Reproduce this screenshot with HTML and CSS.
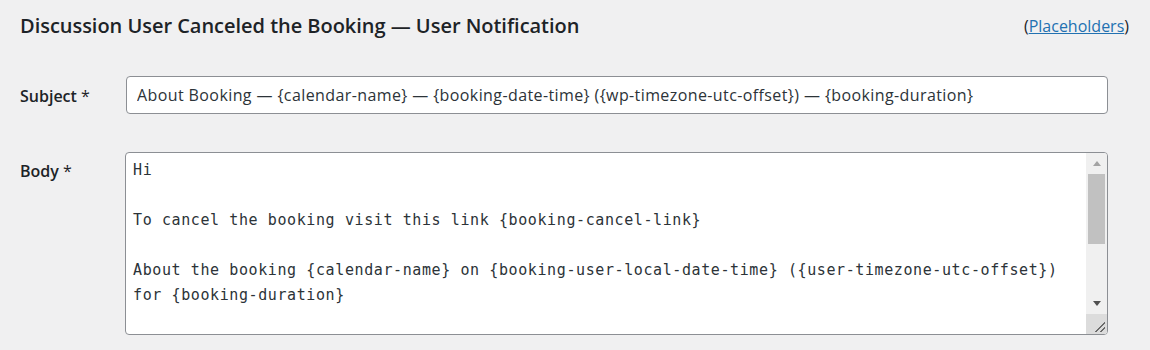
FILE: index.html
```html
<!DOCTYPE html>
<html lang="en">
<head>
    <meta charset="UTF-8" />
    <title>User Notification</title>
    <link rel="stylesheet" href="styles.css">
</head>
<body>

<div class="section-head">
    <h2>Discussion User Canceled the Booking — User Notification</h2>
    <span class="help">(<a href="#">Placeholders</a>)</span>
</div>

<form class="form-table">
    <label for="subject" class="row-label">Subject <span class="req">*</span></label>
    <input type="text" id="subject" class="field-input" value="About Booking — {calendar-name} — {booking-date-time} ({wp-timezone-utc-offset}) — {booking-duration}" />

    <label for="body" class="row-label body-label">Body <span class="req">*</span></label>
    <div class="area-wrap">
        <textarea id="body" class="field-area">Hi

To cancel the booking visit this link {booking-cancel-link}

About the booking {calendar-name} on {booking-user-local-date-time} ({user-timezone-utc-offset})
for {booking-duration}

Thank you
{site-name}
{site-url}</textarea>
        <!-- scrollbar drawn by hand, the headless browser hides native ones -->
        <div class="fake-scroll" aria-hidden="true">
            <span class="sb-btn"><span class="arrow-up"></span></span>
            <span class="sb-track"><span class="sb-thumb"></span></span>
            <span class="sb-btn"><span class="arrow-down"></span></span>
            <span class="sb-corner"></span>
        </div>
    </div>
</form>

</body>
</html>
```

FILE: styles.css
```css
body {
    margin: 0;
    background: #f0f0f1;
    color: #1d2327;
    font-family: "Open Sans", "Noto Sans", sans-serif;
}
.section-head {
    display: flex;
    justify-content: space-between;
    align-items: flex-start;
    padding: 11px 21px 0 20px;
}
.section-head h2 {
    margin: 0;
    font-size: 20px;
    font-weight: 600;
    line-height: 30px;
    letter-spacing: -0.03px;
}
.help {
    font-size: 16px;
    line-height: 30px;
}
.help a {
    color: #2271b1;
    text-decoration: underline;
}
.form-table {
    display: grid;
    grid-template-columns: 106px 982px;
    row-gap: 38px;
    padding: 35px 0 0 20px;
}
.row-label {
    font-size: 16px;
    font-weight: 600;
    align-self: center;
    padding-top: 2px;
}
.row-label .req {
    font-weight: 400;
}
.body-label {
    align-self: start;
    padding-top: 8px;
}
.field-input {
    height: 38px;
    box-sizing: border-box;
    margin: 0;
    padding: 0 10px;
    border: 1px solid #8c8f94;
    border-radius: 4px;
    background: #fff;
    color: #2c3338;
    font-family: "Open Sans", "Noto Sans", sans-serif;
    font-size: 16px;
    letter-spacing: 0.4px;
}
.area-wrap {
    position: relative;
    margin-left: -1px;
}
.field-area {
    display: block;
    width: 100%;
    height: 183px;
    box-sizing: border-box;
    margin: 0;
    padding: 5px 28px 5px 7px;
    border: 1px solid #8c8f94;
    border-radius: 4px;
    background: #fff;
    color: #2c3338;
    font-family: "DejaVu Sans Mono", monospace;
    font-size: 15px;
    line-height: 25px;
    letter-spacing: 0.6px;
    resize: none;
    overflow: hidden;
}
.fake-scroll {
    position: absolute;
    top: 1px;
    right: 1px;
    bottom: 1px;
    width: 21px;
    display: flex;
    flex-direction: column;
    background: #f0f0f0;
    border-radius: 0 3px 3px 0;
    overflow: hidden;
}
.sb-btn {
    height: 21px;
    display: flex;
    align-items: center;
    justify-content: center;
}
.arrow-up {
    border-left: 4px solid transparent;
    border-right: 4px solid transparent;
    border-bottom: 5px solid #a3a3a3;
}
.arrow-down {
    border-left: 4px solid transparent;
    border-right: 4px solid transparent;
    border-top: 5px solid #505050;
}
.sb-track {
    flex: 1;
    padding: 0 2px;
}
.sb-thumb {
    display: block;
    height: 70px;
    background: #c1c1c1;
}
.sb-corner {
    height: 20px;
    background-color: #dcdcdc;
    background-image: linear-gradient(to bottom right, transparent 58%, #6b6b6b 58% 66%, transparent 66% 78%, #6b6b6b 78% 86%, transparent 86%);
    background-size: 12px 12px;
    background-position: right 2px bottom 2px;
    background-repeat: no-repeat;
}
```
